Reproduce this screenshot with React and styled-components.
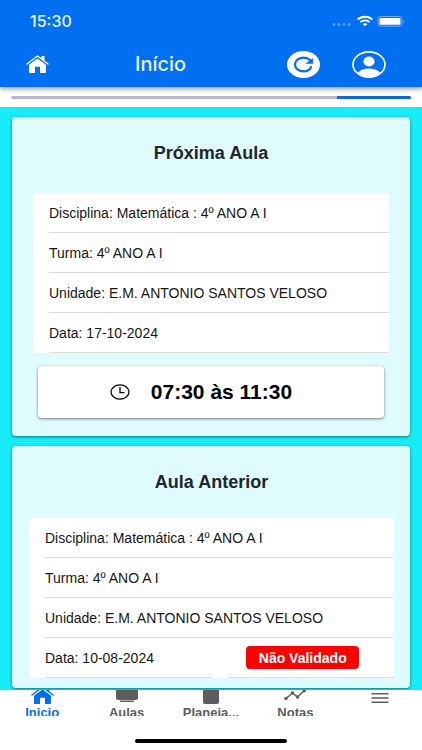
import React, { useState } from 'react';
import styled, { createGlobalStyle } from 'styled-components';

const GlobalStyle = createGlobalStyle`
  * {
    box-sizing: border-box;
  }

  body {
    margin: 0;
    font-family: 'Liberation Sans', Arial, sans-serif;
    background-color: #fff;
  }

  button {
    font-family: inherit;
    border: none;
    cursor: pointer;
  }
`;

const Page = styled.div`
  display: flex;
  flex-direction: column;
  min-height: 100vh;
`;

const Header = styled.header`
  background-color: #0070f0;
  color: #fff;
  box-shadow: 0 2px 5px rgba(0, 0, 0, 0.4);
  z-index: 1;
`;

const StatusBar = styled.div`
  display: flex;
  align-items: center;
  justify-content: space-between;
  height: 41px;
  padding: 0 17px 0 30px;
`;

const Clock = styled.time`
  font-family: Inter, sans-serif;
  font-size: 16px;
  font-weight: 500;
  color: #e4f2ff;
`;

const Toolbar = styled.div`
  display: flex;
  align-items: center;
  height: 46px;
  padding: 0 36px 0 26px;
`;

const ToolbarTitle = styled.h1`
  flex: 1;
  margin: 0;
  padding-left: 86px;
  font-family: Inter, sans-serif;
  font-size: 20px;
  font-weight: 500;
  line-height: 20px;
  color: #e4f2ff;
`;

const IconButton = styled.button`
  display: flex;
  padding: 0;
  background: none;
  color: #fff;
`;

const ToolbarActions = styled.div`
  display: flex;
  gap: 32px;
`;

const ProgressStrip = styled.div`
  padding: 9px 11px 8px;
  background-color: #fff;
`;

const ProgressTrack = styled.div`
  display: flex;
  justify-content: flex-end;
  height: 3px;
  border-radius: 2px;
  background-color: #b9b5d3;
`;

const ProgressBar = styled.div`
  border-radius: 0 2px 2px 0;
  background-color: #0b69dc;
`;

const Content = styled.main`
  display: flex;
  flex: 1;
  flex-direction: column;
  gap: 10px;
  padding: 10px 12px 2px;
  background-color: #18ecf9;
`;

const Card = styled.section`
  padding: ${({ $compact }) => ($compact ? '0 16px 10px 17px' : '0 21px 18px')};
  border-radius: 4px;
  background-color: #dffbfd;
  box-shadow: 0 1px 3px rgba(0, 0, 0, 0.5);
`;

const CardTitle = styled.h2`
  margin: 0;
  padding: 26px 0 ${({ $compact }) => ($compact ? '26px' : '30px')};
  font-size: 18px;
  line-height: 20px;
  text-align: center;
  color: #202629;
`;

const List = styled.ul`
  margin: 0;
  padding: 0;
  list-style: none;
`;

const Row = styled.li`
  display: flex;
  background-color: #fff;
`;

const Item = styled.div`
  display: flex;
  flex: 1;
  align-items: center;
  justify-content: ${({ $center }) => ($center ? 'center' : 'flex-start')};
  height: 40px;
  margin-left: 16px;
  padding-right: 16px;
  border-bottom: 1px solid #dcdcdc;
  font-size: 14px;
  white-space: nowrap;
  color: #151515;
`;

const TimeButton = styled.button`
  display: flex;
  align-items: center;
  justify-content: center;
  gap: 21px;
  width: calc(100% - 10px);
  height: 52px;
  margin: 13px 5px 0;
  padding: 0 20px 0 0;
  border-radius: 4px;
  background-color: #fff;
  box-shadow: 0 1px 3px rgba(0, 0, 0, 0.5);
  font-size: 21px;
  font-weight: bold;
  color: #000;
`;

const StatusButton = styled.button`
  width: 113px;
  height: 23px;
  padding: 0;
  border-radius: 4px;
  background-color: #fe0000;
  font-size: 14px;
  font-weight: bold;
  line-height: 20px;
  color: #fff;
`;

const TabBar = styled.nav`
  display: flex;
  align-items: center;
  height: 26px;
  overflow: hidden;
  background-color: #fff;
`;

const Tab = styled.button`
  display: flex;
  flex: 1;
  flex-direction: column;
  align-items: center;
  justify-content: ${({ $iconOnly }) => ($iconOnly ? 'center' : 'flex-start')};
  gap: 1px;
  min-width: 0;
  height: 34px;
  padding: ${({ $iconOnly }) => ($iconOnly ? '0 0 10px' : '0')};
  background: none;
  font-size: 13px;
  font-weight: bold;
  line-height: 16px;
  color: ${({ $active }) => ($active ? '#0070f0' : '#5d5d5d')};

  svg {
    flex-shrink: 0;
  }
`;

const HomeArea = styled.footer`
  display: flex;
  justify-content: center;
  height: 34px;
  padding-top: 23px;
  background-color: #fff;
`;

const HomeIndicator = styled.div`
  width: 36%;
  height: 4px;
  border-radius: 2px;
  background-color: #000;
`;

const HomeIcon = () => (
  <svg width="23" height="18" viewBox="0 0 23 18" fill="none" aria-hidden="true">
    <path d="M1 9 L11.5 1 L22 9" stroke="currentColor" strokeWidth="1.4" strokeLinecap="round" strokeLinejoin="round" />
    <path d="M15.5 1 H18.5 V6 L15.5 3.6 Z" fill="currentColor" />
    <path d="M11.5 3.4 L20 9.8 V17 Q20 18 19 18 H14 V11.8 H9 V18 H4 Q3 18 3 17 V9.8 Z" fill="currentColor" />
  </svg>
);

const RefreshIcon = () => (
  <svg width="33" height="27" viewBox="0 0 33 27" fill="none" aria-hidden="true">
    <ellipse cx="16.5" cy="13.5" rx="16.5" ry="13.5" fill="#fff" />
    <path d="M24 16.2 C22.8 18.8 20 20.3 16.6 20.3 C11.8 20.3 8 17.3 8 13.5 C8 9.7 11.8 6.7 16.6 6.7 C19.4 6.7 21.6 7.7 23.4 9.4" stroke="#0070f0" strokeWidth="2.2" strokeLinecap="round" />
    <path d="M25.8 7.4 V12.6 H19 Z" fill="#0070f0" stroke="#0070f0" strokeWidth="0.6" strokeLinejoin="round" />
  </svg>
);

const AccountIcon = () => (
  <svg width="34" height="27" viewBox="0 0 34 27" fill="none" aria-hidden="true">
    <ellipse cx="17" cy="13.5" rx="16" ry="12.6" stroke="currentColor" strokeWidth="1.7" />
    <ellipse cx="17" cy="10.5" rx="5.6" ry="4.9" fill="currentColor" />
    <path d="M6 21.5 C8.5 18.8 12.5 17.5 17 17.5 C21.5 17.5 25.5 18.8 28 21.5 C25.5 24.6 21.5 26.4 17 26.4 C12.5 26.4 8.5 24.6 6 21.5 Z" fill="currentColor" />
  </svg>
);

const StatusIcons = () => (
  <svg width="73" height="14" viewBox="0 0 73 14" fill="none" aria-hidden="true">
    {[2, 7, 12, 17].map((x) => (
      <circle key={x} cx={x} cy="10.5" r="1.5" fill="#fff" opacity="0.35" />
    ))}
    <path d="M25.6 5.6 C29.5 1.8 36.5 1.8 40.4 5.6" stroke="#fff" strokeWidth="1.9" />
    <path d="M28.2 8.2 C30.8 5.7 35.2 5.7 37.8 8.2" stroke="#fff" strokeWidth="1.7" />
    <path d="M30.5 10.1 C31.8 8.8 34.2 8.8 35.5 10.1 L33 12.2 Z" fill="#fff" />
    <rect x="46" y="2.5" width="24" height="9.6" rx="2.6" stroke="#fff" opacity="0.45" />
    <rect x="47.5" y="4" width="21" height="6.8" rx="1.4" fill="#fff" />
    <path d="M71.4 5.8 Q73 7.3 71.4 8.8 Z" fill="#fff" opacity="0.6" />
  </svg>
);

const TimeIcon = () => (
  <svg width="20" height="16" viewBox="0 0 20 16" fill="none" stroke="#000" strokeWidth="1.3" aria-hidden="true">
    <ellipse cx="10" cy="8" rx="9" ry="7.2" />
    <path d="M10 3.5 V8.7 H14" strokeLinecap="round" strokeLinejoin="round" />
  </svg>
);

const MonitorIcon = () => (
  <svg width="22" height="18" viewBox="0 0 22 18" fill="currentColor" aria-hidden="true">
    <rect y="1" width="22" height="13" rx="2" />
    <rect x="4" y="14.6" width="14" height="1.3" rx="0.6" />
  </svg>
);

const BookIcon = () => (
  <svg width="16" height="18" viewBox="0 0 16 18" fill="currentColor" aria-hidden="true">
    <rect width="16" height="18" rx="2" />
  </svg>
);

const ChartIcon = () => (
  <svg width="22" height="18" viewBox="0 0 22 18" fill="currentColor" aria-hidden="true">
    <path d="M2 12.5 L8.5 7 L13.5 11 L20 4.8" fill="none" stroke="currentColor" strokeWidth="1.4" />
    <circle cx="2" cy="12.5" r="1.7" />
    <circle cx="8.5" cy="7" r="1.7" />
    <circle cx="13.5" cy="11" r="1.7" />
    <circle cx="20.2" cy="4.8" r="1.7" />
  </svg>
);

const MenuIcon = () => (
  <svg width="18" height="12" viewBox="0 0 18 12" stroke="currentColor" strokeWidth="1.5" strokeLinecap="round" aria-hidden="true">
    <path d="M1 1.7 H17 M1 6 H17 M1 10.3 H17" />
  </svg>
);

const nextClass = [
  'Disciplina: Matemática : 4º ANO A I',
  'Turma: 4º ANO A I',
  'Unidade: E.M. ANTONIO SANTOS VELOSO',
  'Data: 17-10-2024',
];

const previousClass = [
  'Disciplina: Matemática : 4º ANO A I',
  'Turma: 4º ANO A I',
  'Unidade: E.M. ANTONIO SANTOS VELOSO',
];

const tabs = [
  { label: 'Inicio', Icon: HomeIcon },
  { label: 'Aulas', Icon: MonitorIcon },
  { label: 'Planeja...', Icon: BookIcon },
  { label: 'Notas', Icon: ChartIcon },
];

const App = () => {
  const [activeTab, setActiveTab] = useState('Inicio');
  const progress = 18.5;

  return (
    <Page>
      <GlobalStyle />
      <Header>
        <StatusBar>
          <Clock>15:30</Clock>
          <StatusIcons />
        </StatusBar>
        <Toolbar>
          <IconButton aria-label="Início">
            <HomeIcon />
          </IconButton>
          <ToolbarTitle>Início</ToolbarTitle>
          <ToolbarActions>
            <IconButton aria-label="Atualizar">
              <RefreshIcon />
            </IconButton>
            <IconButton aria-label="Perfil">
              <AccountIcon />
            </IconButton>
          </ToolbarActions>
        </Toolbar>
      </Header>

      <ProgressStrip>
        <ProgressTrack>
          <ProgressBar style={{ width: `${progress}%` }} />
        </ProgressTrack>
      </ProgressStrip>

      <Content>
        <Card>
          <CardTitle>Próxima Aula</CardTitle>
          <List>
            {nextClass.map((text) => (
              <Row key={text}>
                <Item>{text}</Item>
              </Row>
            ))}
          </List>
          <TimeButton>
            <TimeIcon />
            07:30 às 11:30
          </TimeButton>
        </Card>

        <Card $compact>
          <CardTitle $compact>Aula Anterior</CardTitle>
          <List>
            {previousClass.map((text) => (
              <Row key={text}>
                <Item>{text}</Item>
              </Row>
            ))}
            <Row>
              <Item>Data: 10-08-2024</Item>
              <Item $center>
                <StatusButton>Não Validado</StatusButton>
              </Item>
            </Row>
          </List>
        </Card>
      </Content>

      <TabBar>
        {tabs.map(({ label, Icon }) => (
          <Tab key={label} $active={label === activeTab} onClick={() => setActiveTab(label)}>
            <Icon />
            {label}
          </Tab>
        ))}
        <Tab $iconOnly aria-label="Menu">
          <MenuIcon />
        </Tab>
      </TabBar>
      <HomeArea>
        <HomeIndicator />
      </HomeArea>
    </Page>
  );
};

export default App;
